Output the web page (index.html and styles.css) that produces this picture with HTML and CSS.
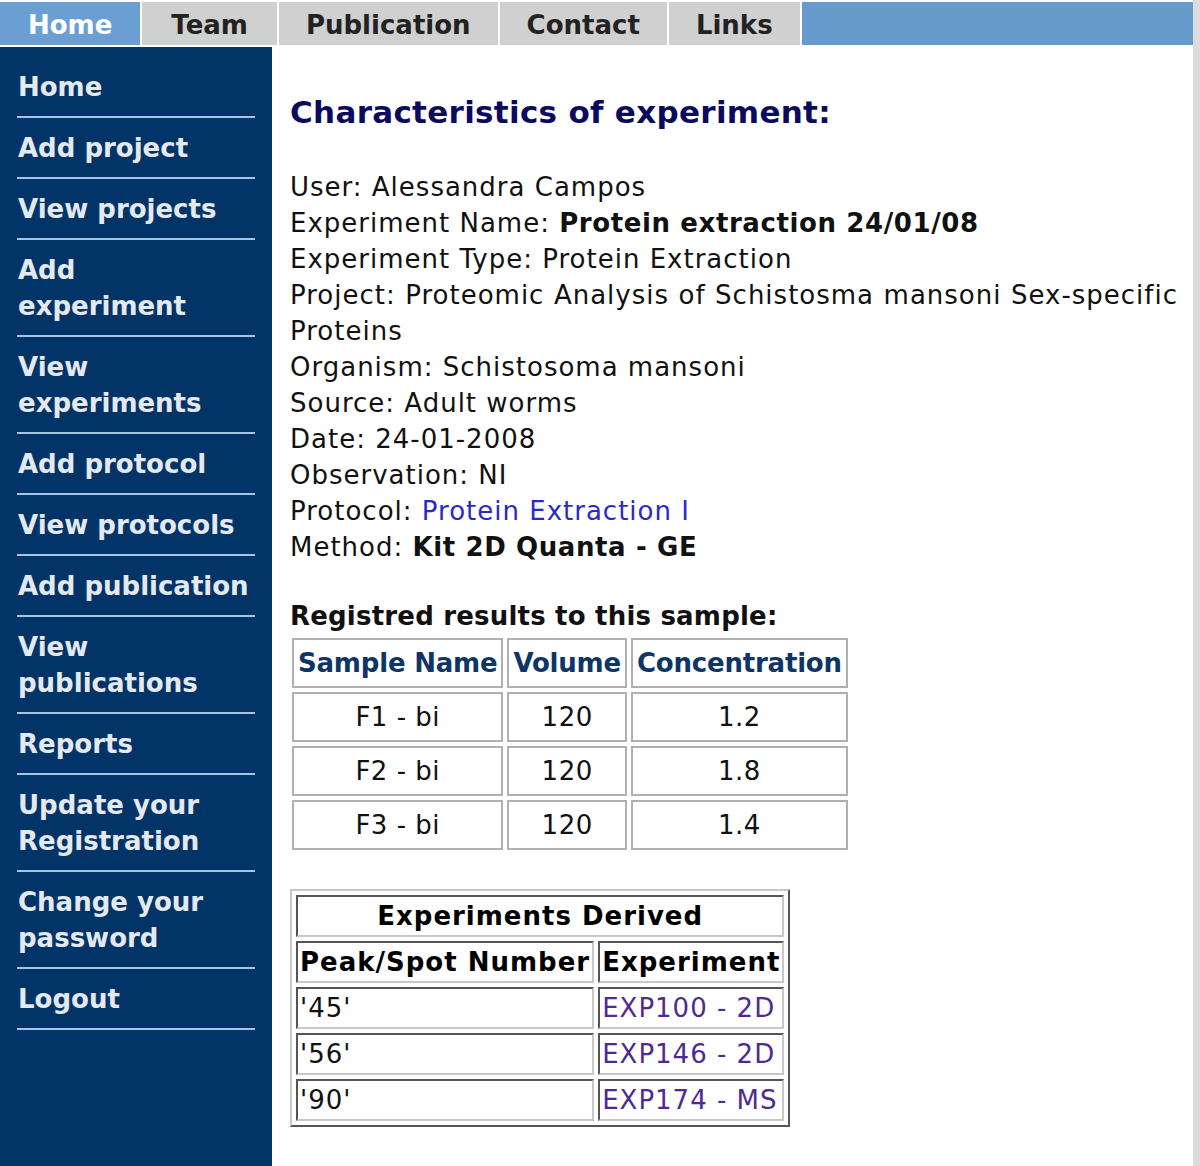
FILE: index.html
```html
<!DOCTYPE html>
<html>
<head>
<meta charset="utf-8">
<title>Characteristics of experiment</title>
<link rel="stylesheet" href="styles.css">
</head>
<body>
<div class="page">
  <nav class="tabs">
    <a class="tab active" href="#">Home</a>
    <a class="tab team" href="#">Team</a>
    <a class="tab" href="#">Publication</a>
    <a class="tab" href="#">Contact</a>
    <a class="tab" href="#">Links</a>
    <span class="tab-fill"></span>
  </nav>
  <div class="body">
    <aside class="sidebar">
      <ul class="menu">
        <li><a href="#">Home</a></li>
        <li><a href="#">Add project</a></li>
        <li><a href="#">View projects</a></li>
        <li><a href="#">Add<br>experiment</a></li>
        <li><a href="#">View<br>experiments</a></li>
        <li><a href="#">Add protocol</a></li>
        <li><a href="#">View protocols</a></li>
        <li><a href="#">Add publication</a></li>
        <li><a href="#">View<br>publications</a></li>
        <li><a href="#">Reports</a></li>
        <li><a href="#">Update your<br>Registration</a></li>
        <li><a href="#">Change your<br>password</a></li>
        <li><a href="#">Logout</a></li>
      </ul>
    </aside>
    <main class="content">
      <h1 class="title">Characteristics of experiment:</h1>
      <p class="info">User: Alessandra Campos<br>
Experiment Name: <b>Protein extraction 24/01/08</b><br>
Experiment Type: Protein Extraction<br>
Project: Proteomic Analysis of Schistosma mansoni Sex-specific Proteins<br>
Organism: Schistosoma mansoni<br>
Source: Adult worms<br>
Date: 24-01-2008<br>
Observation: NI<br>
Protocol: <a class="link" href="#">Protein Extraction I</a><br>
Method: <b>Kit 2D Quanta - GE</b></p>

      <h2 class="subtitle">Registred results to this sample:</h2>
      <table class="results">
        <tr><th>Sample Name</th><th>Volume</th><th>Concentration</th></tr>
        <tr><td>F1 - bi</td><td>120</td><td>1.2</td></tr>
        <tr><td>F2 - bi</td><td>120</td><td>1.8</td></tr>
        <tr><td>F3 - bi</td><td>120</td><td>1.4</td></tr>
      </table>

      <table class="derived">
        <tr><th colspan="2" class="cap">Experiments Derived</th></tr>
        <tr><th>Peak/Spot Number</th><th>Experiment</th></tr>
        <tr><td>'45'</td><td><a class="visited" href="#">EXP100 - 2D</a></td></tr>
        <tr><td>'56'</td><td><a class="visited" href="#">EXP146 - 2D</a></td></tr>
        <tr><td>'90'</td><td><a class="visited" href="#">EXP174 - MS</a></td></tr>
      </table>
    </main>
  </div>
</div>
</body>
</html>
```

FILE: styles.css
```css
html, body {
  margin: 0;
  padding: 0;
}
body {
  background: #dcdcdc;
  font-family: "DejaVu Sans", Verdana, sans-serif;
  color: #111;
}
.page {
  width: 1193px;
  min-height: 100vh;
  background: #fff;
  display: flex;
  flex-direction: column;
}
.tabs {
  display: flex;
  height: 43px;
  margin-top: 2px;
  margin-bottom: 2px;
  gap: 2px;
}
.tab {
  display: flex;
  align-items: center;
  justify-content: center;
  padding: 3px 27px 0 27px;
  background: #d0d0d0;
  color: #222;
  font-weight: bold;
  font-size: 26px;
  text-decoration: none;
}
.tab.active {
  padding: 3px 28px 0 28px;
}
.tab.team {
  padding: 3px 29px 0 29px;
}
.tab.active {
  background: #6b9fd3;
  color: #fff;
}
.tab-fill {
  flex: 1;
  background: #6699cc;
}
.body {
  flex: 1;
  display: flex;
}
.sidebar {
  width: 272px;
  flex: none;
  background: #033468;
  padding: 10px 17px 0 17px;
  box-sizing: border-box;
}
.menu {
  list-style: none;
  margin: 0;
  padding: 0;
}
.menu li {
  border-bottom: 2px solid #a8c4e4;
  padding: 12px 0 11px 1px;
}
.menu a {
  color: #e4e9ef;
  font-weight: bold;
  font-size: 26px;
  line-height: 36px;
  text-decoration: none;
  white-space: nowrap;
  display: block;
}
.content {
  flex: 1;
  padding: 0 15px 0 18px;
}
.title {
  color: #0a0a5e;
  font-size: 31px;
  letter-spacing: 0.3px;
  margin: 45px 0 0 0;
  line-height: 40px;
}
.info {
  font-size: 26px;
  line-height: 36px;
  letter-spacing: 1px;
  margin: 37px 0 0 0;
  text-align: justify;
}
.info b {
  font-weight: bold;
  letter-spacing: 0.6px;
}
.link {
  color: #2a2ac8;
  text-decoration: none;
}
.subtitle {
  font-size: 26px;
  line-height: 36px;
  letter-spacing: 0.2px;
  margin: 33px 0 0 0;
  font-weight: bold;
}
.results {
  border-spacing: 4px;
  margin: 0 0 0 -2px;
  font-size: 26px;
}
.results th, .results td {
  border: 2px solid #b0b0b0;
  padding: 5px 4px;
  line-height: 36px;
  text-align: center;
}
.results td {
  letter-spacing: 0.5px;
}
.results th {
  color: #0d3566;
  font-weight: bold;
  letter-spacing: -0.2px;
}
.derived {
  margin-top: 35px;
  border: 2px solid;
  border-color: #c8c8c8 #555 #555 #c8c8c8;
  border-spacing: 4px;
  font-size: 26px;
  letter-spacing: 1px;
}
.derived th, .derived td {
  border: 2px solid;
  border-color: #555 #c8c8c8 #c8c8c8 #555;
  padding: 1px 2px;
  line-height: 36px;
  text-align: left;
}
.derived th.cap {
  text-align: center;
}
.derived th {
  color: #000;
}
.visited {
  color: #4f2a92;
  text-decoration: none;
}
```
